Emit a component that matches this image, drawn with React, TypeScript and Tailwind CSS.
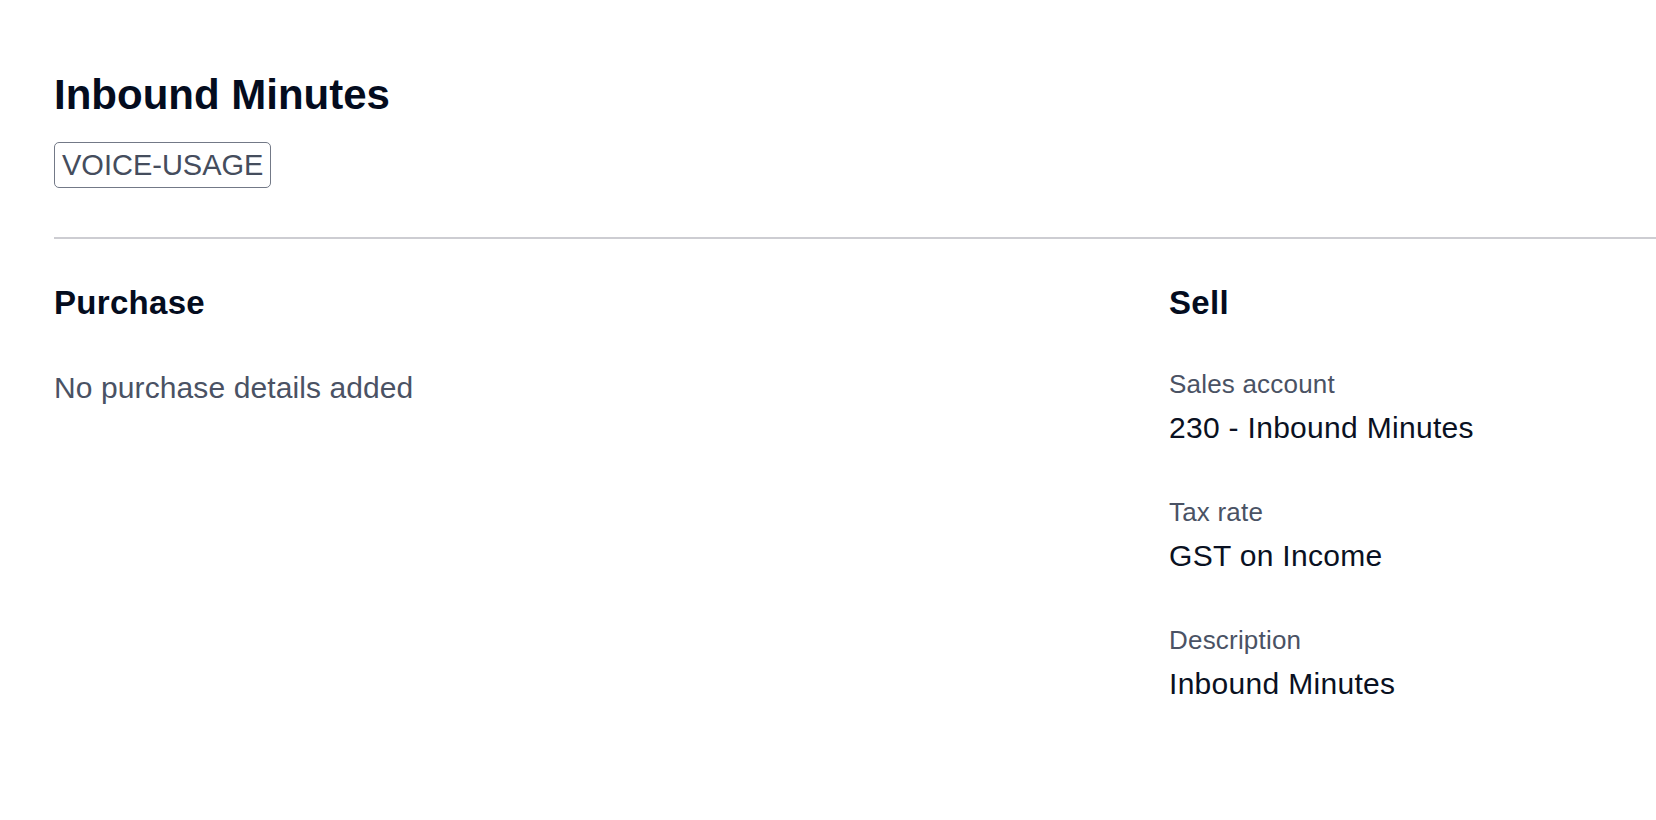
const fieldRows = [
  { label: "Sales account", value: "230 - Inbound Minutes" },
  { label: "Tax rate", value: "GST on Income" },
  { label: "Description", value: "Inbound Minutes" },
];

function Field({ label, value, first }: { label: string; value: string; first?: boolean }) {
  return (
    <div className={first ? "mt-[45px]" : "mt-[50px]"}>
      <p className="text-[26px] leading-[32px] tracking-[0.2px] text-[#4a5264]">{label}</p>
      <p className="mt-[10px] text-[30px] leading-[36px] tracking-[0.3px] text-[#0a1122]">{value}</p>
    </div>
  );
}

export default function App() {
  return (
    <div
      className="min-h-screen overflow-hidden bg-white pl-[54px] pt-[71px]"
      style={{ fontFamily: '"Liberation Sans", Arial, sans-serif' }}
    >
      <h1 className="text-[42px] font-bold leading-[48px] text-[#040c1e]">Inbound Minutes</h1>
      <div className="mt-[23px] inline-flex h-[46px] items-center rounded-[5px] border-[1.5px] border-[#737987] px-[7px]">
        <span className="text-[29px] leading-[44px] text-[#454d5d]">VOICE-USAGE</span>
      </div>

      <div className="mt-[49px] h-[2px] w-full bg-[#cdcdd2]" />

      <div className="mt-[44px] flex">
        <section className="w-[1115px] shrink-0">
          <h2 className="text-[33px] font-bold leading-[40px] tracking-[0.3px] text-[#040c1e]">Purchase</h2>
          <p className="mt-[47px] text-[30px] leading-[36px] tracking-[0.1px] text-[#4a5264]">No purchase details added</p>
        </section>
        <section className="min-w-0 flex-1">
          <h2 className="text-[33px] font-bold leading-[40px] tracking-[0.3px] text-[#040c1e]">Sell</h2>
          {fieldRows.map((row, i) => (
            <Field key={row.label} label={row.label} value={row.value} first={i === 0} />
          ))}
        </section>
      </div>
    </div>
  );
}
